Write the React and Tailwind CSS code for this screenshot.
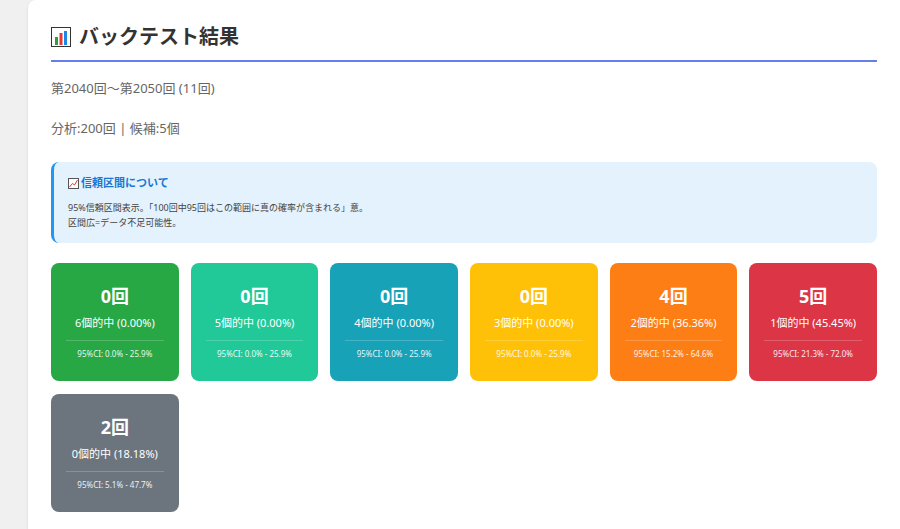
const font = { fontFamily: '"Noto Sans", "Noto Sans CJK JP", sans-serif' };

const stats = [
  { c: 'bg-[#28a745]', n: '0回', l: '6個的中 (0.00%)', ci: '95%CI: 0.0% - 25.9%' },
  { c: 'bg-[#20c997]', n: '0回', l: '5個的中 (0.00%)', ci: '95%CI: 0.0% - 25.9%' },
  { c: 'bg-[#17a2b8]', n: '0回', l: '4個的中 (0.00%)', ci: '95%CI: 0.0% - 25.9%' },
  { c: 'bg-[#ffc107]', n: '0回', l: '3個的中 (0.00%)', ci: '95%CI: 0.0% - 25.9%' },
  { c: 'bg-[#fd7e14]', n: '4回', l: '2個的中 (36.36%)', ci: '95%CI: 15.2% - 64.6%' },
  { c: 'bg-[#dc3545]', n: '5回', l: '1個的中 (45.45%)', ci: '95%CI: 21.3% - 72.0%' },
  { c: 'bg-[#6c757d]', n: '2回', l: '0個的中 (18.18%)', ci: '95%CI: 5.1% - 47.7%' },
];

function ChartIcon() {
  return (
    <svg width="20" height="20" viewBox="0 0 20 20">
      <rect x="0.5" y="0.5" width="19" height="19" fill="#fff" stroke="#333" />
      <rect x="4" y="10" width="3" height="8" fill="#2e9e3e" />
      <rect x="8.5" y="6" width="3" height="12" fill="#e53935" />
      <rect x="13" y="4" width="3" height="14" fill="#1e88e5" />
    </svg>
  );
}

export default function App() {
  return (
    <div className="min-h-[529px] bg-[#f0f0f0] pl-[28px]" style={font}>
      <div className="bg-white rounded-tl-lg min-h-[529px] px-[23px] pt-[22px] shadow-sm">
        <h2 className="flex items-center gap-2 text-[20px] font-bold text-[#333] pb-2 border-b-2 border-[#667eea]">
          <ChartIcon />
          バックテスト結果
        </h2>
        <p className="text-[13px] text-[#666] mt-[17px]">第2040回〜第2050回 (11回)</p>
        <p className="text-[13px] text-[#666] mt-[20px]">分析:200回 | 候補:5個</p>
        <div className="mt-[24px] bg-[#e3f2fd] border-l-[3px] border-[#2196f3] rounded-lg px-[14px] py-[13px]">
          <div className="flex items-center gap-[2px] text-[11px] font-bold text-[#1976d2]">
            <svg width="11" height="11" viewBox="0 0 11 11">
              <rect x="0.5" y="0.5" width="10" height="10" fill="#fff" stroke="#555" />
              <path d="M1.5 9 L4.5 5.5 L6.5 7 L9.5 2" stroke="#e53935" fill="none" strokeWidth="1" />
            </svg>
            信頼区間について
          </div>
          <p className="text-[9px] text-[#444] mt-[8px] leading-[15px]">
            95%信頼区間表示。「100回中95回はこの範囲に真の確率が含まれる」意。
            <br />
            区間広=データ不足可能性。
          </p>
        </div>
        <div className="grid grid-cols-6 gap-x-[12px] gap-y-[13px] mt-[20px]">
          {stats.map((s, i) => (
            <div key={i} className={`${s.c} rounded-lg h-[118px] text-white flex flex-col items-center px-[15px] pt-[20px]`}>
              <div className="text-[18px] font-bold leading-[26px]">{s.n}</div>
              <div className="text-[11px] mt-[6px] leading-[16px]">{s.l}</div>
              <div className="w-full border-t border-white/20 mt-[9px]" />
              <div className="text-[8px] mt-[7px] opacity-90">{s.ci}</div>
            </div>
          ))}
        </div>
      </div>
    </div>
  );
}
